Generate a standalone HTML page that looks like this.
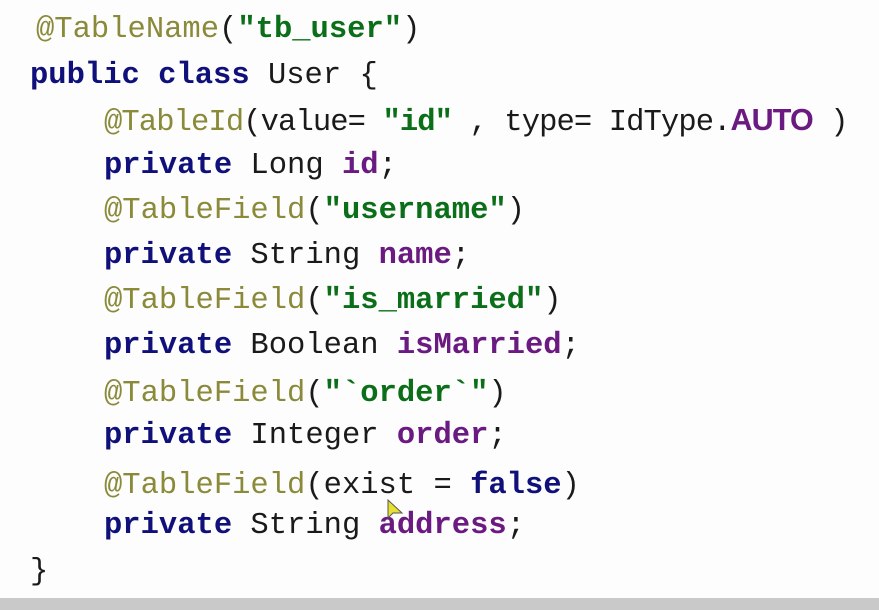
<!DOCTYPE html>
<html><head><meta charset="utf-8"><style>
html,body{margin:0;padding:0;width:879px;height:610px;overflow:hidden;background:#fdfdfd;}
.l{position:absolute;white-space:pre;font-family:"Liberation Mono","DejaVu Sans Mono",monospace;font-size:30.5px;line-height:44px;color:#1a1a1a;}
.a{color:#8a8a3a}
.s{color:#0b6e18;font-weight:bold}
.k{color:#10107a;font-weight:bold}
.f{color:#6a1a80;font-weight:bold}
.bot{position:absolute;left:0;top:598px;width:879px;height:12px;background:#c9c9c9;}
</style></head><body>
<div class="l" style="left:36px;top:8px"><span class="a">@TableName</span>(<span class="s">"tb_user"</span>)</div>
<div class="l" style="left:30px;top:54px"><span class="k">public class</span> User {</div>
<div class="l" style="left:104px;top:98px;letter-spacing:-0.9px"><span class="a">@TableId</span>(value= <span class="s">"id"</span> , type= IdType.<span class="f" style="font-family:'Liberation Sans',sans-serif">AUTO</span> )</div>
<div class="l" style="left:104px;top:144px"><span class="k">private</span> Long <span class="f">id</span>;</div>
<div class="l" style="left:104px;top:189px"><span class="a">@TableField</span>(<span class="s">"username"</span>)</div>
<div class="l" style="left:104px;top:234px"><span class="k">private</span> String <span class="f">name</span>;</div>
<div class="l" style="left:104px;top:279px"><span class="a">@TableField</span>(<span class="s">"is_married"</span>)</div>
<div class="l" style="left:104px;top:324px"><span class="k">private</span> Boolean <span class="f">isMarried</span>;</div>
<div class="l" style="left:104px;top:372px"><span class="a">@TableField</span>(<span class="s">"`order`"</span>)</div>
<div class="l" style="left:104px;top:414px"><span class="k">private</span> Integer <span class="f">order</span>;</div>
<div class="l" style="left:104px;top:464px"><span class="a">@TableField</span>(exist = <span class="k">false</span>)</div>
<div class="l" style="left:104px;top:504px"><span class="k">private</span> String <span class="f">address</span>;</div>
<div class="l" style="left:30px;top:550px">}</div>
<svg style="position:absolute;left:386px;top:498px" width="20" height="26"><path d="M2 2 L2 20 L7 15 L16 15 Z" fill="#e8e030" stroke="#555" stroke-width="1"/></svg>
<div class="bot"></div>
</body></html>
